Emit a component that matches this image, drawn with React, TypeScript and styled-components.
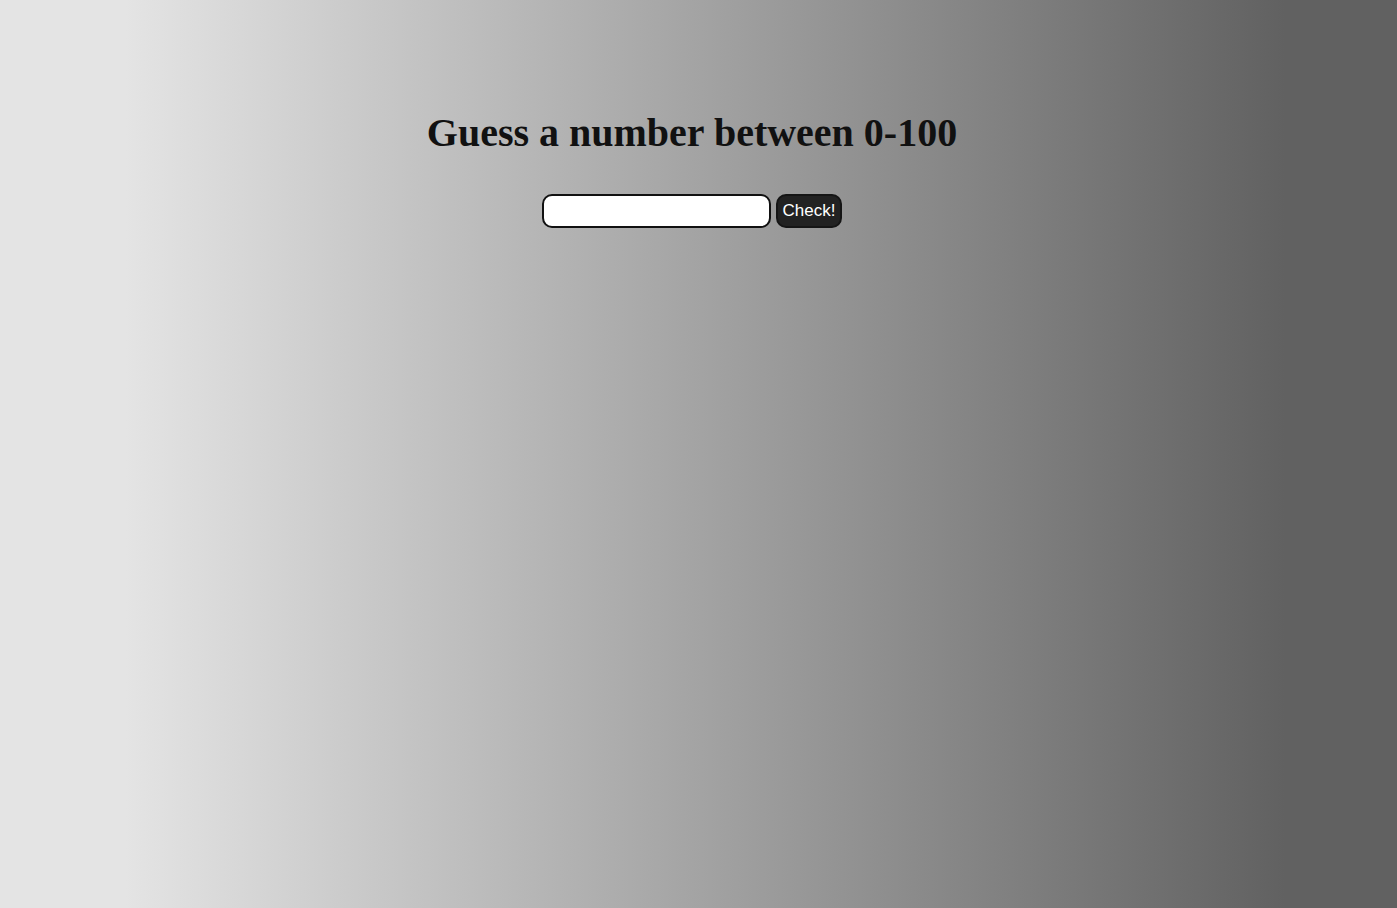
import React from "react";
import styled, { createGlobalStyle } from "styled-components";

const Global = createGlobalStyle`
  html, body { margin: 0; padding: 0; height: 100%; }
  body {
    background: linear-gradient(to right, #e4e4e4 9%, #616161 92%);
    background-attachment: fixed;
    min-height: 908px;
  }
`;

const Page = styled.main`
  display: flex;
  flex-direction: column;
  align-items: center;
  padding-top: 110px;
  padding-right: 13px;
  min-height: 908px;
  box-sizing: border-box;
`;

const Title = styled.h1`
  margin: 0;
  font-family: "Liberation Serif", "Times New Roman", serif;
  font-weight: bold;
  font-size: 40px;
  line-height: 46px;
  color: #111;
`;

const Form = styled.form`
  display: flex;
  align-items: stretch;
  gap: 5px;
  margin-top: 38px;
`;

const Input = styled.input`
  box-sizing: border-box;
  width: 229px;
  height: 34px;
  border: 2px solid #111;
  border-radius: 10px;
  background: #fff;
  padding: 0 8px;
  font-family: "Liberation Sans", Arial, sans-serif;
  font-size: 17px;
  outline: none;
`;

const Button = styled.button`
  box-sizing: border-box;
  height: 34px;
  padding: 0 5px;
  border: 2px solid #151515;
  border-radius: 10px;
  background: #222;
  color: #fff;
  font-family: "Liberation Sans", Arial, sans-serif;
  font-size: 17px;
  cursor: pointer;
`;

export default function App() {
  return (
    <>
      <Global />
      <Page>
        <Title>Guess a number between 0-100</Title>
        <Form onSubmit={(e) => e.preventDefault()}>
          <Input type="text" />
          <Button type="submit">Check!</Button>
        </Form>
      </Page>
    </>
  );
}
